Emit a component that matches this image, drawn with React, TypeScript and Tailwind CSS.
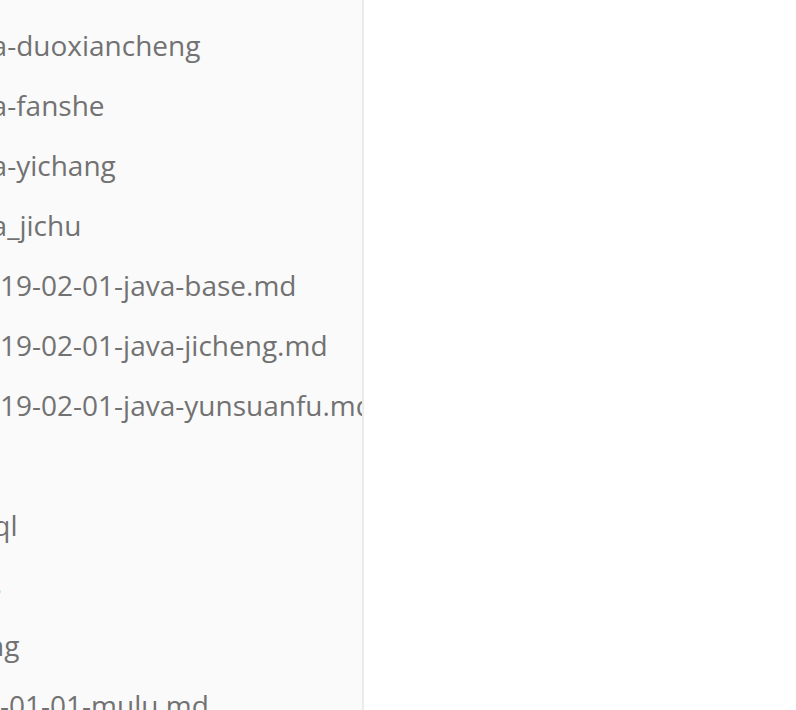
import React from "react";

const rows: { name: string; offset: string }[] = [
  { name: "java-duoxiancheng", offset: "-ml-[45px]" },
  { name: "java-fanshe", offset: "-ml-[45px]" },
  { name: "java-yichang", offset: "-ml-[45px]" },
  { name: "java_jichu", offset: "-ml-[45px]" },
  { name: "2019-02-01-java-base.md", offset: "-ml-[32px]" },
  { name: "2019-02-01-java-jicheng.md", offset: "-ml-[32px]" },
  { name: "2019-02-01-java-yunsuanfu.md", offset: "-ml-[32px]" },
  { name: "java", offset: "-ml-[100px]" },
  { name: "mysql", offset: "-ml-[60px]" },
  { name: "js", offset: "-ml-[19px]" },
  { name: "spring", offset: "-ml-[62px]" },
  { name: "2019-01-01-mulu.md", offset: "-ml-[64px]" },
];

const App = () => {
  return (
    <div className="flex h-[710px] w-full bg-white overflow-hidden">
      {/* Sidebar file tree */}
      <aside className="w-[364px] shrink-0 bg-[#fafafa] border-r-2 border-[#ebebeb] overflow-hidden">
        <ul className="pt-[15px] font-['Open_Sans',sans-serif] text-[28px] text-[#727272]">
          {rows.map((row) => (
            <li key={row.name} className="h-[60px] flex items-center whitespace-nowrap">
              <span className={row.offset}>{row.name}</span>
            </li>
          ))}
        </ul>
      </aside>
      <main className="flex-1 bg-white" />
    </div>
  );
};

export default App;
